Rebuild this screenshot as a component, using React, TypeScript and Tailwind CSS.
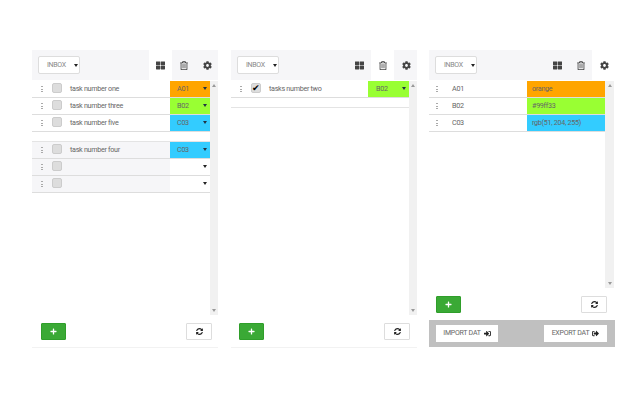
import React from 'react';
import { FaCog, FaPlus, FaRegTrashAlt, FaSignInAlt, FaSignOutAlt, FaSyncAlt, FaThLarge } from 'react-icons/fa';

interface Task {
  text?: string;
  label: string;
  color: string;
  checked?: boolean;
}

function Caret({ className = 'border-t-[#222]' }: { className?: string }) {
  return <span className={`block w-0 h-0 border-x-[2.5px] border-x-transparent border-t-[3px] ${className}`} />;
}

function Grip() {
  return (
    <span className="flex flex-col gap-[1.5px] w-[2px] shrink-0">
      <span className="block w-[2px] h-[1px] bg-[#aaa]" />
      <span className="block w-[2px] h-[1px] bg-[#aaa]" />
      <span className="block w-[2px] h-[1px] bg-[#aaa]" />
    </span>
  );
}

function Toolbar({ active }: { active: number }) {
  const icons = [
    <FaThLarge key="grid" className="w-[9px] h-[9px]" />,
    <FaRegTrashAlt key="trash" className="w-[8px] h-[9px] ml-[1px]" />,
    <FaCog key="cog" className="w-[9px] h-[9px] ml-[1px]" />,
  ];
  return (
    <div className="flex h-[30px] bg-[#f6f6f8]">
      <div className="flex-1 flex items-center pl-[6px]">
        <div className="w-[42px] h-[18px] flex items-center justify-between pl-[8px] pr-[1.5px] bg-white border border-[#ddd] rounded-[2px] text-[7px] tracking-[-0.3px] text-[#888]">
          <span className="pt-[1px]">INBOX</span>
          <Caret />
        </div>
      </div>
      {icons.map((icon, i) => (
        <div
          key={i}
          className={`w-[23px] flex items-center justify-center text-[#444] ${i === active ? 'bg-white' : ''}`}
        >
          {icon}
        </div>
      ))}
    </div>
  );
}

function TaskRow({ task, shaded, wide }: { task: Task; shaded?: boolean; wide?: boolean }) {
  return (
    <div className={`flex h-[17px] border-b border-[#ddd] ${shaded ? 'bg-[#f6f6f8]' : 'bg-white'}`}>
      <div className="flex flex-1 items-center pl-[9px]">
        <Grip />
        <span className="ml-[9px] mb-[2px] w-[10px] h-[10px] rounded-[2px] border border-[#ccc] bg-[#ddd] flex items-center justify-center text-[9px] leading-none text-black">
          {task.checked ? '✔' : ''}
        </span>
        <span className="ml-[8px] pt-[1px] text-[7.2px] tracking-[-0.3px] text-[#666]">{task.text}</span>
      </div>
      <div
        className={`flex items-center justify-between pr-[3px] text-[7.2px] tracking-[-0.3px] text-[#666] ${wide ? 'w-[41px] pl-[8px]' : 'w-[40px] pl-[7px]'}`}
        style={{ backgroundColor: task.color }}
      >
        <span className="pt-[1px]">{task.label}</span>
        <Caret className={`mb-[2px] ${task.color === '#ffffff' ? 'border-t-[#222]' : 'border-t-[#234]'}`} />
      </div>
    </div>
  );
}

function Scrollbar({ className = 'w-[8px]' }: { className?: string }) {
  return (
    <div className={`${className} bg-[#f1f1f1] flex flex-col items-center justify-between py-[3px]`}>
      <Caret className="rotate-180 border-t-[#999]" />
      <Caret className="border-t-[#999]" />
    </div>
  );
}

function Footer({ className }: { className: string }) {
  return (
    <div className={`h-[32px] flex items-start justify-between pt-[8px] ${className}`}>
      <button className="w-[25px] h-[17px] bg-[#3aa935] border border-[#2f9e2a] rounded-[1px] flex items-center justify-center text-white">
        <FaPlus className="w-[7px] h-[7px]" />
      </button>
      <button className="w-[26px] h-[17px] bg-white border border-[#ddd] rounded-[1px] flex items-center justify-center text-[#222]">
        <FaSyncAlt className="w-[7px] h-[7px]" />
      </button>
    </div>
  );
}

function TaskPanel({
  active,
  top,
  bottom,
  wide,
  footerClass,
}: {
  active: number;
  top: Task[];
  bottom: Task[];
  wide?: boolean;
  footerClass: string;
}) {
  return (
    <div className="w-[186px] h-[298px] flex flex-col border-b border-[#f2f2f2]">
      <Toolbar active={active} />
      <div className="flex flex-1 mt-[1px] min-h-0">
        <div className="flex-1">
          {top.map((task, i) => (
            <TaskRow key={i} task={task} wide={wide} />
          ))}
          <div className="h-[10px] border-b border-[#e4e4e4]" />
          {bottom.map((task, i) => (
            <TaskRow key={i} task={task} shaded />
          ))}
        </div>
        <Scrollbar />
      </div>
      <Footer className={footerClass} />
    </div>
  );
}

function ColorRow({ label, value, color }: { label: string; value: string; color: string }) {
  return (
    <div className="flex h-[17px] border-b border-[#ddd]">
      <div className="w-[98px] flex items-center pl-[7px]">
        <Grip />
        <span className="ml-[14px] pt-[1px] text-[7.2px] tracking-[-0.3px] text-[#666]">{label}</span>
      </div>
      <div
        className="flex-1 flex items-center pl-[5px] pt-[1px] text-[7.2px] tracking-[-0.3px] text-[#666]"
        style={{ backgroundColor: color }}
      >
        {value}
      </div>
    </div>
  );
}

function SettingsPanel() {
  return (
    <div className="w-[186px] h-[297px] flex flex-col ml-[-1px]">
      <Toolbar active={2} />
      <div className="flex flex-1 mt-[1px] min-h-0">
        <div className="flex-1">
          <ColorRow label="A01" value="orange" color="#ffa500" />
          <ColorRow label="B02" value="#99ff33" color="#99ff33" />
          <ColorRow label="C03" value="rgb(51, 204, 255)" color="rgb(51, 204, 255)" />
        </div>
        <Scrollbar className="w-[9px] mr-[1px]" />
      </div>
      <Footer className="pl-[7px] pr-[8px]" />
      <div className="h-[27px] bg-[#c0c0c0] flex items-center justify-between pl-[7px] pr-[8px]">
        <button className="w-[62px] h-[17px] bg-white flex items-center justify-center gap-[3px] text-[7px] tracking-[-0.25px] text-[#666]">
          IMPORT DAT <FaSignInAlt className="w-[7px] h-[7px] text-[#222]" />
        </button>
        <button className="w-[63px] h-[17px] bg-white flex items-center justify-center gap-[3px] text-[7px] tracking-[-0.25px] text-[#666]">
          EXPORT DAT <FaSignOutAlt className="w-[7px] h-[7px] text-[#222]" />
        </button>
      </div>
    </div>
  );
}

export default function App() {
  return (
    <div className="w-[640px] h-[400px] bg-white flex gap-[13px] pl-[32px] pt-[50px] font-['Roboto',sans-serif]">
      <TaskPanel
        active={0}
        footerClass="pl-[9px] pr-[6px]"
        top={[
          { text: 'task number one', label: 'A01', color: '#ffa500' },
          { text: 'task number three', label: 'B02', color: '#99ff33' },
          { text: 'task number five', label: 'C03', color: '#33ccff' },
        ]}
        bottom={[
          { text: 'task number four', label: 'C03', color: '#33ccff' },
          { label: '', color: '#ffffff' },
          { label: '', color: '#ffffff' },
        ]}
      />
      <TaskPanel
        active={1}
        wide
        footerClass="pl-[8px] pr-[7px]"
        top={[{ text: 'tasks number two', label: 'B02', color: '#99ff33', checked: true }]}
        bottom={[]}
      />
      <SettingsPanel />
    </div>
  );
}
